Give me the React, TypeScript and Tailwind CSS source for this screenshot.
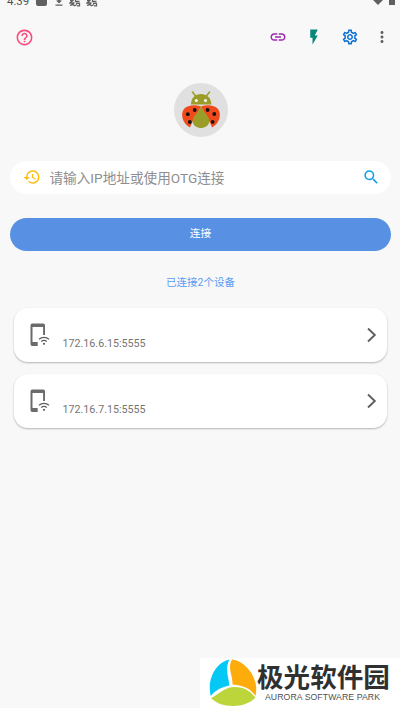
import {
  MdFlashOn,
  MdHelpOutline,
  MdHistory,
  MdInsertLink,
  MdMoreVert,
  MdOutlineSettings,
  MdSearch,
} from 'react-icons/md';

const devices = ['172.16.6.15:5555', '172.16.7.15:5555'];

function DebugIcon() {
  return (
    <svg width="12" height="8" viewBox="0 0 12 8" fill="none" stroke="#606060" strokeWidth="1.3">
      <path d="M1 .500h3.500M4.500 0L1 3h4.500M6.500 0v1.500h4M7 3.300h3.500v2.500H8M1 5.300c2 0 3-1 4-2.300M4 4.500l1.500 1.300L8 4.500" />
    </svg>
  );
}

function StatusBar() {
  return (
    <div className="flex h-2 items-start justify-between overflow-hidden pl-[7px] pr-[9px]">
      <div className="flex items-start">
        <span className="-mt-[5px] w-[29px] text-[11.500px] leading-[13px] text-[#505050]">4:39</span>
        <span className="h-[6px] w-[11px] rounded-b-[2px] bg-[#606060]" />
        <svg className="ml-2" width="8" height="7" viewBox="0 0 8 7" fill="#606060">
          <path d="M2.700 0h2.600v.5H7L4 3.500 1 .5h1.700zM.5 4.600h7v1.100h-7z" />
        </svg>
        <span className="ml-[6px] flex gap-[5px]">
          <DebugIcon />
          <DebugIcon />
        </span>
      </div>
      <div className="flex items-start gap-[5px]">
        <svg width="12" height="5" viewBox="0 0 12 5" fill="#606060">
          <path d="M1 0h10L6 5z" />
        </svg>
        <span className="mr-[-4px] h-[5px] w-[6px] bg-[#606060]" />
      </div>
    </div>
  );
}

function Toolbar() {
  return (
    <header className="flex h-[58px] items-center pl-[14.500px] pr-[9px]">
      <MdHelpOutline className="size-[19px] text-[#fb4a7b]" />
      <div className="ml-auto flex items-center gap-[18px]">
        <MdInsertLink className="size-[18px] text-[#9c27b0]" />
        <MdFlashOn className="size-[18px] text-[#07877c]" />
        <MdOutlineSettings className="size-[18px] text-[#0d72d6]" />
        <MdMoreVert className="-ml-[4px] size-[18px] text-[#606060]" />
      </div>
    </header>
  );
}

function Ladybug() {
  return (
    <svg className="size-[54px]" viewBox="0 0 54 54">
      <circle cx="27" cy="27" r="27" fill="#e0e0e0" />
      <path d="M21.500 13l-3-4M32.500 13l3-4" stroke="#9a9e28" strokeWidth="1.500" strokeLinecap="round" />
      <path d="M17 21.500C17 14.500 21.500 11 27 11s10.300 3.500 10.300 10.500z" fill="#9a9e28" />
      <circle cx="22.300" cy="17.400" r="1.500" fill="#fff" />
      <circle cx="31.500" cy="17.400" r="1.500" fill="#fff" />
      <path
        d="M27 23.500C21 21.500 13.500 22 10 26c-4 5-1.500 14.500 6 18.500 1-3 2-5 4-8z"
        fill="#f04a1c"
      />
      <path
        d="M27 23.500c6-2 13.500-1.500 17 2.500 4 5 1.500 14.500-6 18.500-1-3-2-5-4-8z"
        fill="#f04a1c"
      />
      <path
        d="M27 22.500c1.500 5 4 7 6.500 10.500 5 7-1 12-6.500 12s-11.500-5-6.500-12C23 29.500 25.500 27.500 27 22.500z"
        fill="#9a9e28"
      />
      <g fill="#111">
        <circle cx="20.700" cy="27" r="1.900" />
        <circle cx="13.800" cy="31.200" r="1.900" />
        <circle cx="15.800" cy="39" r="1.900" />
        <circle cx="33.600" cy="27" r="1.900" />
        <circle cx="40.300" cy="31" r="1.900" />
        <circle cx="38.600" cy="38.900" r="1.900" />
      </g>
    </svg>
  );
}

function PhoneWifiIcon() {
  return (
    <svg className="mt-[8px] h-6 w-[20px] shrink-0" viewBox="0 0 20 24" fill="none">
      <path
        d="M15 12V2.200A1.700 1.700 0 0 0 13.300.500H2.200A1.700 1.700 0 0 0 .500 2.200v19A1.700 1.700 0 0 0 2.200 22.900h5.500v-4H2.500V4h10.600v8z"
        fill="#6b6b6b"
      />
      <path
        d="M9 16.200a7.500 7.500 0 0 1 10 0M11.200 18.600a4.200 4.200 0 0 1 5.600 0"
        stroke="#606060"
        strokeWidth="1.300"
      />
      <circle cx="14" cy="20.800" r="1.100" fill="#606060" />
    </svg>
  );
}

function DeviceCard({ address }: { address: string }) {
  return (
    <li className="flex h-[54px] rounded-[14px] bg-white pl-[16.500px] pr-[10px] pt-[7px] shadow-[0_1px_2px_rgba(0,0,0,0.28)]">
      <PhoneWifiIcon />
      <span className="ml-[12.500px] mt-[22px] text-[10.700px] leading-[14px] text-[#757575]">{address}</span>
      <svg className="ml-auto mt-[12px]" width="11" height="16" viewBox="0 0 11 16" fill="none">
        <path d="M2 1.500L8.800 8 2 14.500" stroke="#606060" strokeWidth="1.900" />
      </svg>
    </li>
  );
}

function Watermark() {
  return (
    <footer className="mt-auto flex h-[50px] w-[200px] self-end bg-white pl-[9px]">
      <svg className="mt-[1px] size-[48px] shrink-0" viewBox="0 0 48 48">
        <path d="M20.500.500C8 3-2.500 19 1.700 37c5-6 11-9 18.500-10.500C20.500 20 15 11 20.500.500z" fill="#06c8f4" />
        <path d="M23 .500C34 1 51 17 46.500 37 42 30 35 26.500 23.500 25.500 24 16 18 10 23 .500z" fill="#fdac0b" />
        <path d="M2 39c7-3 13-11 24-11 9 0 15 4 20.500 10.500C41 44 34 47 24 47S7 44 2 39z" fill="#bcd53a" />
      </svg>
      <div className="flex flex-col whitespace-nowrap text-[#303030]">
        <span className="mt-[4px] font-['Noto_Sans_CJK_SC',sans-serif] text-[26.600px] font-bold leading-[28px]">
          极光软件园
        </span>
        <span className="ml-[8px] mt-[2px] font-['Liberation_Sans',sans-serif] text-[8.700px] leading-[10px] tracking-[0.080px] text-[#505050]">
          AURORA SOFTWARE PARK
        </span>
      </div>
    </footer>
  );
}

export default function App() {
  return (
    <div className="flex h-[708px] w-[400px] flex-col overflow-hidden bg-[#f8f8f8] font-[Roboto,'Noto_Sans_CJK_SC',sans-serif]">
      <StatusBar />
      <Toolbar />
      <main className="flex flex-col items-center">
        <div className="mt-[16px] pt-[0.500px] pl-[1px]">
          <Ladybug />
        </div>
        <div className="mt-[24.500px] flex h-[33px] w-[381px] items-center rounded-full bg-white pl-[13px] pr-[10px]">
          <MdHistory className="-mt-px size-[18px] text-[#fbbc0d]" />
          <span className="ml-[9px] pt-px text-[13.640px] text-[#8e8e8e]">请输入IP地址或使用OTG连接</span>
          <MdSearch className="-mt-px ml-auto size-[18.500px] text-[#159fe6]" />
        </div>
        <button
          type="button"
          className="mt-[24px] h-[33px] w-[381px] rounded-full bg-[#5891e4] pl-px text-[10.700px] text-white"
        >
          连接
        </button>
        <p className="mt-[24px] pl-px text-[10.500px] leading-[16px] text-[#5a9cf4]">已连接2个设备</p>
        <ul className="mt-[17px] flex w-[373px] flex-col gap-[12px]">
          {devices.map((address) => (
            <DeviceCard key={address} address={address} />
          ))}
        </ul>
      </main>
      <Watermark />
    </div>
  );
}
